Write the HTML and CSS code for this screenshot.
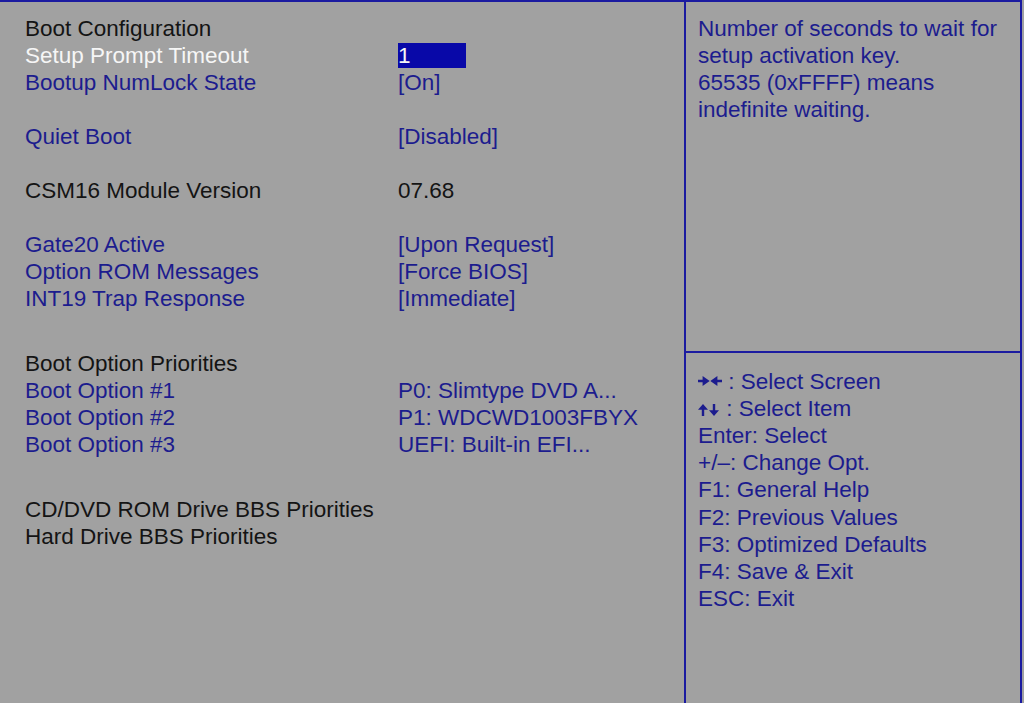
FILE: index.html
```html
<!DOCTYPE html>
<html>
<head>
<meta charset="utf-8">
<title>Boot Configuration</title>
<link rel="stylesheet" href="styles.css">
</head>
<body>
<div class="screen">
  <div class="main">
    <div class="group">
      <div class="row"><span class="label heading">Boot Configuration</span><span class="value"></span></div>
      <div class="row"><span class="label selected">Setup Prompt Timeout</span><span class="value"><span class="edit">1</span></span></div>
      <div class="row"><span class="label">Bootup NumLock State</span><span class="value">[On]</span></div>
    </div>
    <div class="group gap">
      <div class="row"><span class="label">Quiet Boot</span><span class="value">[Disabled]</span></div>
    </div>
    <div class="group gap">
      <div class="row"><span class="label heading">CSM16 Module Version</span><span class="value info">07.68</span></div>
    </div>
    <div class="group gap">
      <div class="row"><span class="label">Gate20 Active</span><span class="value">[Upon Request]</span></div>
      <div class="row"><span class="label">Option ROM Messages</span><span class="value">[Force BIOS]</span></div>
      <div class="row"><span class="label">INT19 Trap Response</span><span class="value">[Immediate]</span></div>
    </div>
    <div class="group gap-lg">
      <div class="row"><span class="label heading">Boot Option Priorities</span><span class="value"></span></div>
      <div class="row"><span class="label">Boot Option #1</span><span class="value">P0: Slimtype DVD A...</span></div>
      <div class="row"><span class="label">Boot Option #2</span><span class="value">P1: WDCWD1003FBYX</span></div>
      <div class="row"><span class="label">Boot Option #3</span><span class="value">UEFI: Built-in EFI...</span></div>
    </div>
    <div class="group gap-lg">
      <div class="row"><span class="label heading">CD/DVD ROM Drive BBS Priorities</span><span class="value"></span></div>
      <div class="row"><span class="label heading">Hard Drive BBS Priorities</span><span class="value"></span></div>
    </div>
  </div>
  <div class="side">
    <div class="help">
      <div>Number of seconds to wait for</div>
      <div>setup activation key.</div>
      <div>65535 (0xFFFF) means</div>
      <div>indefinite waiting.</div>
    </div>
    <div class="keys">
      <div><svg class="arr arr-lr" width="24" height="10" viewBox="0 0 24 10"><path d="M0 3.8h6.5v2.4H0z M4.6 0L11.7 5 4.6 10z M12.3 5L19.4 0v10z M17.5 3.8H24v2.4h-6.5z" fill="currentColor"/></svg> : Select Screen</div>
      <div><svg class="arr arr-ud" width="22" height="12" viewBox="0 0 22 12"><path d="M5 0L10 5.8H0z M3.8 4.5h2.4V12H3.8z M14.8 0h2.4v7.5h-2.4z M16 12L11 6.2h10z" fill="currentColor"/></svg> : Select Item</div>
      <div>Enter: Select</div>
      <div>+/&ndash;: Change Opt.</div>
      <div>F1: General Help</div>
      <div>F2: Previous Values</div>
      <div>F3: Optimized Defaults</div>
      <div>F4: Save &amp; Exit</div>
      <div>ESC: Exit</div>
    </div>
  </div>
</div>
</body>
</html>
```

FILE: styles.css
```css
html, body {
  margin: 0;
  padding: 0;
  background: #a1a1a1;
}

body {
  width: 1024px;
  height: 703px;
  overflow: hidden;
  font-family: "Liberation Sans", Arial, sans-serif;
  font-size: 22.5px;
  color: #1c1c8e;
}

.screen {
  display: flex;
  width: 1022px;
  height: 701px;
  border-top: 2px solid #1b1ba0;
}

.main {
  width: 686px;
  box-sizing: border-box;
  padding: 13.2px 0 0 25px;
  border-right: 2px solid #1b1ba0;
  flex: none;
}

.group.gap {
  margin-top: 27px;
}

.group.gap-lg {
  margin-top: 38px;
}

.row {
  display: grid;
  grid-template-columns: 373px 1fr;
  height: 27px;
  line-height: 27px;
  white-space: nowrap;
}

.label.heading,
.value.info {
  color: #141414;
}

.label.selected {
  color: #f6f6f6;
}

.value {
  display: flex;
  align-items: center;
}

.edit {
  display: block;
  width: 68px;
  height: 25px;
  line-height: 25px;
  background: #0808a8;
  color: #f6f6f6;
}

.side {
  width: 336px;
  box-sizing: border-box;
  flex: none;
  display: flex;
  flex-direction: column;
  border-right: 2px solid #1b1ba0;
}

.help {
  height: 351px;
  box-sizing: border-box;
  padding: 13.2px 0 0 12px;
  border-bottom: 2px solid #1b1ba0;
  line-height: 27px;
  flex: none;
}

.keys {
  padding: 14.75px 0 0 12px;
  line-height: 27.15px;
  white-space: nowrap;
}

.arr {
  display: inline-block;
  color: #1c1c8e;
}

.arr-lr {
  vertical-align: 3px;
}

.arr-ud {
  vertical-align: 0;
}
```
